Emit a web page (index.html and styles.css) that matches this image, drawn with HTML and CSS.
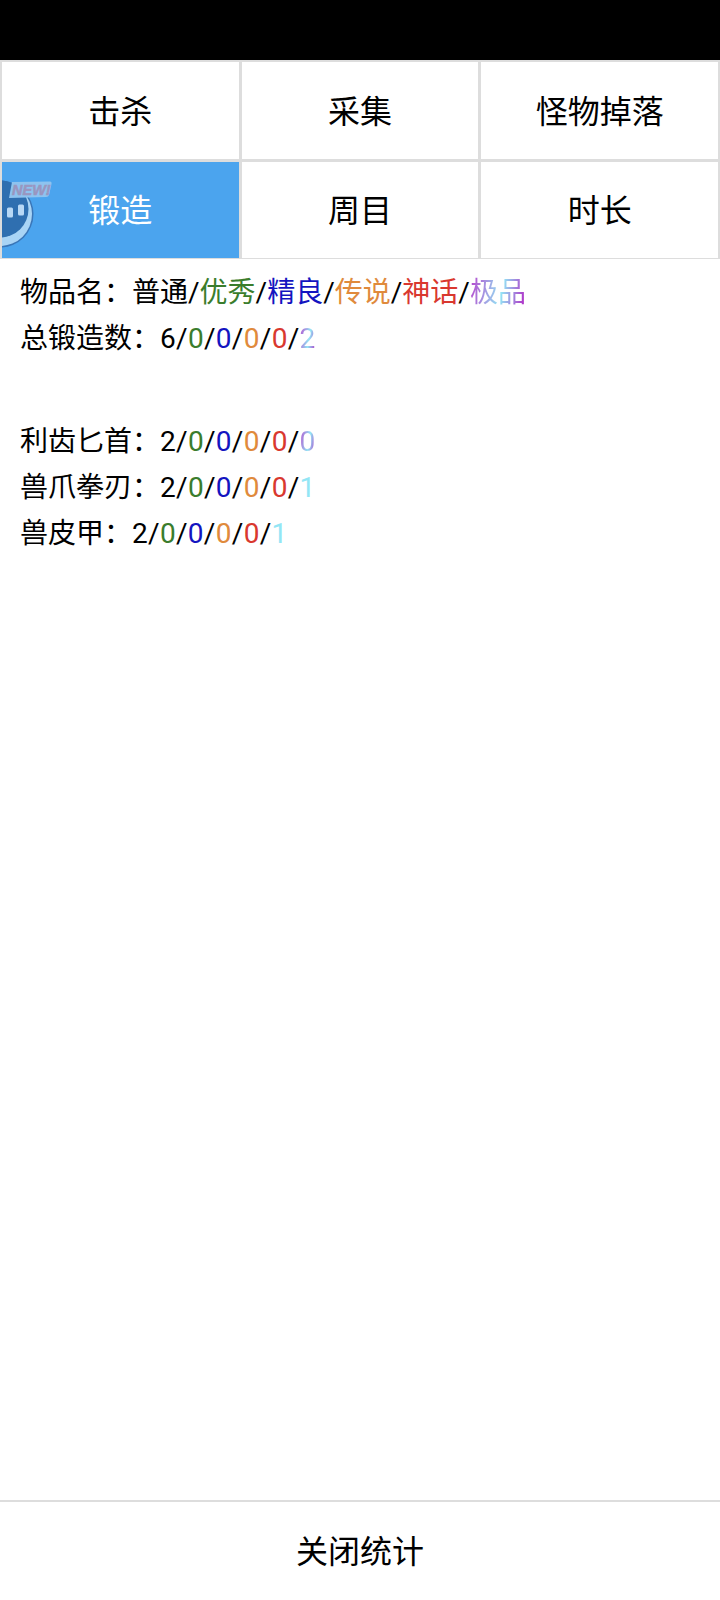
FILE: index.html
```html
<!DOCTYPE html>
<html lang="zh-CN">
<head>
    <meta charset="UTF-8">
    <meta name="viewport" content="width=device-width, initial-scale=1.0">
    <title>统计</title>
    <link rel="stylesheet" href="styles.css">
</head>
<body>

<div class="statusBar"></div>

<!-- 统计分类 -->
<div class="tabs">
    <div class="tab">击杀</div>
    <div class="tab">采集</div>
    <div class="tab">怪物掉落</div>
    <div class="tab active">
        <svg class="newBadge" width="60" height="96" viewBox="0 0 60 96">
            <circle cx="-2" cy="52" r="33.500" fill="#3a76b8"/>
            <circle cx="-2" cy="52" r="32" fill="#a9d4f5"/>
            <circle cx="-2" cy="47" r="28.500" fill="#2f6fb0"/>
            <rect x="5" y="45.500" width="6" height="10" rx="1.500" fill="#b8d8f5"/>
            <rect x="16" y="42.500" width="6" height="11" rx="1.500" fill="#b8d8f5"/>
            <path d="M10 20 L48 19.500 Q50 19.500 49.500 22 L47 33 Q46.500 35 44 35 L7 36 Z" fill="#8ec3ef"/>
            <text x="10" y="33" class="newText">NEW!</text>
        </svg>
        锻造
    </div>
    <div class="tab">周目</div>
    <div class="tab">时长</div>
</div>

<!-- 锻造统计 -->
<div class="stats">
    <p>物品名：普通/<span class="good">优秀</span>/<span class="rare">精良</span>/<span class="epic">传说</span>/<span class="myth">神话</span>/<span class="best">极品</span></p>
    <p>总锻造数：<span class="nums">6/<span class="good">0</span>/<span class="rare">0</span>/<span class="epic">0</span>/<span class="myth">0</span>/<span class="best">2</span></span></p>
    <p class="gap">利齿匕首：<span class="nums">2/<span class="good">0</span>/<span class="rare">0</span>/<span class="epic">0</span>/<span class="myth">0</span>/<span class="best">0</span></span></p>
    <p>兽爪拳刃：<span class="nums">2/<span class="good">0</span>/<span class="rare">0</span>/<span class="epic">0</span>/<span class="myth">0</span>/<span class="best one">1</span></span></p>
    <p>兽皮甲：<span class="nums">2/<span class="good">0</span>/<span class="rare">0</span>/<span class="epic">0</span>/<span class="myth">0</span>/<span class="best one">1</span></span></p>
</div>

<div class="closeBtn">关闭统计</div>

</body>
</html>
```

FILE: styles.css
```css
* {
    box-sizing: border-box;
}

body {
    margin: 0;
    height: 1600px;
    display: flex;
    flex-direction: column;
    background-color: #fff;
    color: #000;
    font-family: Roboto, "Noto Sans CJK SC", sans-serif;
    overflow: hidden;
}

.statusBar {
    height: 60px;
    background-color: #000;
}

.tabs {
    display: grid;
    grid-template-columns: repeat(3, 1fr);
    grid-auto-rows: 96.5px;
    gap: 3px;
    padding: 2px 2px 1px;
    background-color: #ddd;
}

.tab {
    position: relative;
    display: flex;
    align-items: center;
    justify-content: center;
    padding-bottom: 3px;
    background-color: #fff;
    font-size: 32px;
    overflow: hidden;
}

.tab.active {
    background-color: #4ba4ee;
    color: #fff;
}

.newBadge {
    position: absolute;
    left: 0;
    top: 0;
}

.newText {
    font-family: "Liberation Sans", sans-serif;
    font-size: 14.5px;
    font-weight: bold;
    font-style: italic;
    fill: #9a96c0;
    stroke: #9a96c0;
    stroke-width: 0.5px;
}

.stats {
    padding: 11px 20px 0;
    font-size: 28px;
    line-height: 46px;
}

.stats p {
    margin: 0;
}

.stats .gap {
    margin-top: 57px;
}

.nums {
    letter-spacing: 0.3px;
}

.good {
    color: #3a7d2c;
}

.rare {
    color: #1414c0;
}

.epic {
    color: #e08a3c;
}

.myth {
    color: #d9382f;
}

.best {
    background-image: linear-gradient(100deg, #b44fd0 5%, #93e6f5 55%, #b030c8 95%);
    -webkit-background-clip: text;
    background-clip: text;
    color: transparent;
}

.best.one {
    background-image: none;
    color: #93e6f5;
}

.closeBtn {
    margin-top: auto;
    height: 100px;
    border-top: 2px solid #ddd;
    padding-bottom: 4px;
    display: flex;
    align-items: center;
    justify-content: center;
    font-size: 32px;
}
```
